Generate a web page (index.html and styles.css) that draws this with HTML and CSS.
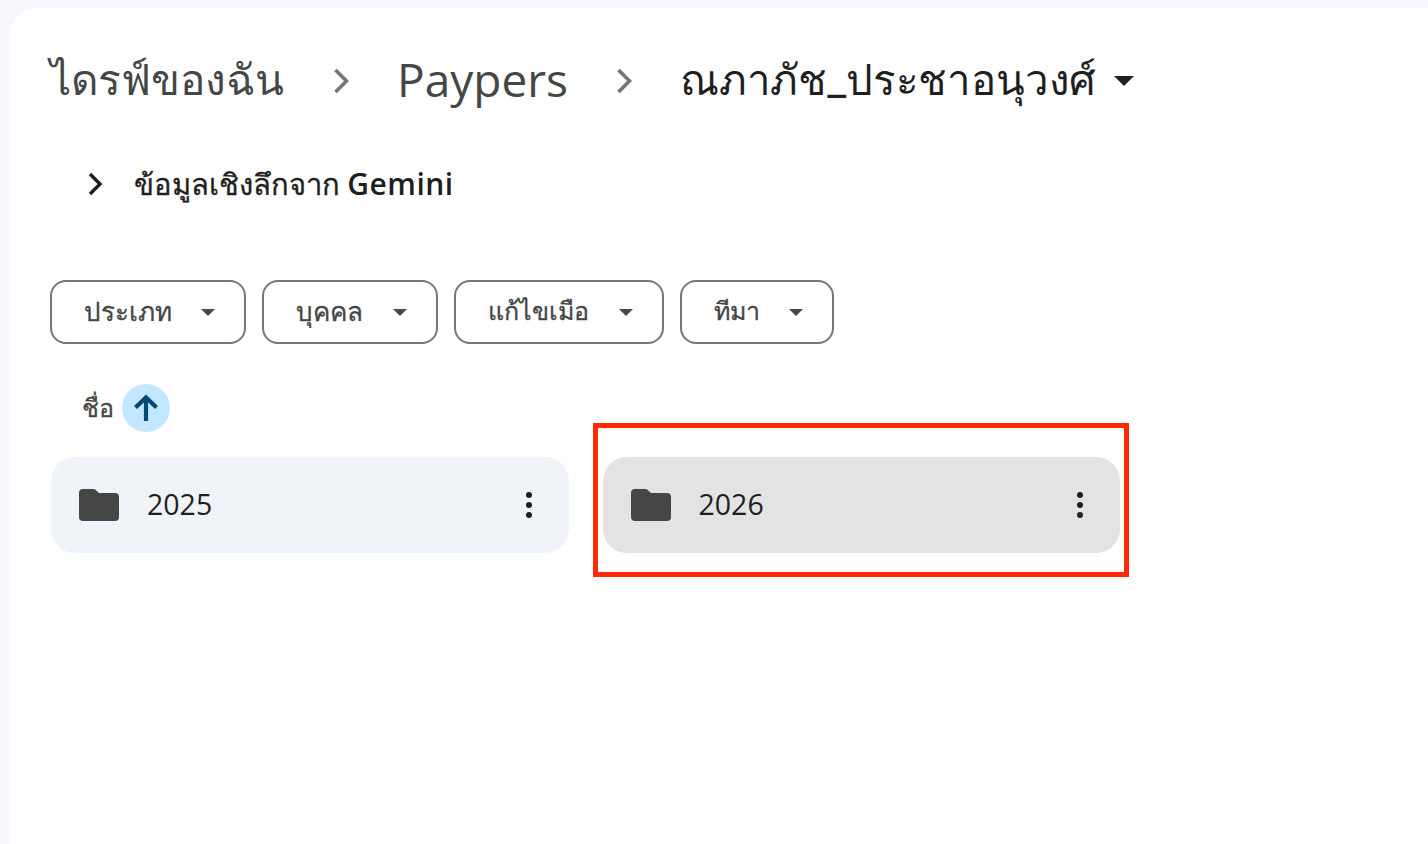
FILE: index.html
```html
<!DOCTYPE html>
<html lang="th">
<head>
<meta charset="utf-8">
<title>ณภาภัช_ประชาอนุวงศ์</title>
<link rel="stylesheet" href="styles.css">
</head>
<body>
<main class="panel">
  <nav class="crumbs">
    <span class="crumb">ไดรฟ์ของฉัน</span>
    <svg class="sep" viewBox="0 0 16 26"><path d="M2.500 2L13.500 13L2.500 24" fill="none" stroke="#747775" stroke-width="3.600"/></svg>
    <span class="crumb latin">Paypers</span>
    <svg class="sep" viewBox="0 0 16 26"><path d="M2.500 2L13.500 13L2.500 24" fill="none" stroke="#747775" stroke-width="3.600"/></svg>
    <span class="crumb current">ณภาภัช_ประชาอนุวงศ์</span>
    <span class="caret big"></span>
  </nav>
  <div class="insight">
    <svg class="insight-icon" viewBox="0 0 16 24"><path d="M3 2l10 10L3 22" fill="none" stroke="#1f1f1f" stroke-width="3.400"/></svg>
    <span>ข้อมูลเชิงลึกจาก <span class="latin-medium">Gemini</span></span>
  </div>
  <div class="filters">
    <button class="chip chip-type"><span>ประเภท</span><i class="caret"></i></button>
    <button class="chip chip-person"><span>บุคคล</span><i class="caret"></i></button>
    <button class="chip chip-edit"><span>แก้ไขเมือ</span><i class="caret"></i></button>
    <button class="chip chip-source"><span>ทีมา</span><i class="caret"></i></button>
  </div>
  <div class="sort">
    <span>ชื่อ</span>
    <span class="sort-btn"><svg viewBox="0 0 28 28"><path d="M14 27V3.500M3.500 13.500L14 3.500L24.500 13.500" fill="none" stroke="#004a77" stroke-width="4.200"/></svg></span>
  </div>
  <div class="grid">
    <div class="card">
      <svg class="folder" viewBox="0 0 40 32"><path d="M4 0h10.500a3 3 0 0 1 2.200 1L20 4h16a4 4 0 0 1 4 4v20a4 4 0 0 1-4 4H4a4 4 0 0 1-4-4V4a4 4 0 0 1 4-4z" fill="#444746"/></svg>
      <span class="name">2025</span>
      <span class="dots"><b></b><b></b><b></b></span>
    </div>
    <div class="card selected">
      <svg class="folder" viewBox="0 0 40 32"><path d="M4 0h10.500a3 3 0 0 1 2.200 1L20 4h16a4 4 0 0 1 4 4v20a4 4 0 0 1-4 4H4a4 4 0 0 1-4-4V4a4 4 0 0 1 4-4z" fill="#444746"/></svg>
      <span class="name">2026</span>
      <span class="dots"><b></b><b></b><b></b></span>
    </div>
  </div>
  <div class="highlight"></div>
</main>
</body>
</html>
```
FILE: styles.css
```css
* { box-sizing: border-box; }
html, body { height: 100%; }
body {
  margin: 0;
  background: #f8f9fe;
  font-family: Roboto, "Noto Sans", "Noto Sans CJK SC", sans-serif;
  color: #1f1f1f;
  overflow: hidden;
}
.panel {
  position: relative;
  margin: 8px 0 0 10px;
  height: 836px;
  background: #fff;
  border-radius: 28px 0 0 0;
  padding: 0 0 0 40px;
}
.crumbs {
  display: flex;
  align-items: center;
  height: 60px;
  padding-top: 43px;
  box-sizing: content-box;
  font-size: 42.300px;
  color: #444746;
}
.crumb { white-space: nowrap; line-height: 60px; }
.latin {
  font-family: "Open Sans", Roboto, sans-serif;
  font-size: 46px;
  margin: -4px -1px 0 -1px;
}
.latin-medium {
  font-family: "Open Sans", Roboto, sans-serif;
  font-size: 30px;
  font-weight: 600;
  letter-spacing: 0.5px;
  -webkit-text-stroke: 0;
}
.sep { width: 16px; height: 26px; margin: 0 49px; flex: none; }
.current { color: #1f1f1f; font-size: 42px; letter-spacing: -0.17px; margin-left: -1px; }
.caret {
  display: block;
  width: 0;
  height: 0;
  border-left: 7.500px solid transparent;
  border-right: 7.500px solid transparent;
  border-top: 7.500px solid #444746;
}
.caret.big {
  margin-left: 18px;
  border-left-width: 10px;
  border-right-width: 10px;
  border-top-width: 10px;
  border-top-color: #1f1f1f;
}
.insight {
  display: flex;
  align-items: center;
  margin-top: 53px;
  margin-left: 37px;
  height: 40px;
  font-size: 29.200px;
  font-weight: 500;
  -webkit-text-stroke: 0.35px #1f1f1f;
}
.insight-icon { width: 16px; height: 24px; margin-right: 31px; }
.filters { display: flex; gap: 16px; margin-top: 76px; }
.chip {
  display: flex;
  align-items: center;
  justify-content: space-between;
  height: 64px;
  padding: 0 28px 2px 32px;
  background: #fff;
  border: 2px solid #747775;
  border-radius: 16px;
  font: 500 26px Roboto, "Noto Sans", sans-serif;
  color: #444746;
  -webkit-text-stroke: 0.3px #444746;
}
.chip .caret { position: relative; top: 1px; left: -1px; }
.chip-type { width: 196px; }
.chip-person { width: 176px; }
.chip-edit { width: 210px; font-size: 25px; }
.chip-source { width: 154px; font-size: 25px; }
.sort {
  display: flex;
  align-items: center;
  gap: 8px;
  margin: 40px 0 0 32px;
  height: 48px;
  font-size: 25px;
  font-weight: 500;
  color: #444746;
  -webkit-text-stroke: 0.3px #444746;
}
.sort-btn {
  display: flex;
  align-items: center;
  justify-content: center;
  width: 48px;
  height: 48px;
  border-radius: 50%;
  background: #c2e7ff;
}
.sort-btn svg { width: 28px; height: 28px; }
.grid { display: flex; gap: 34px; margin: 25px 0 0 1px; }
.card {
  display: flex;
  align-items: center;
  width: 517.500px;
  height: 96px;
  padding: 0 37px 0 28px;
  border-radius: 24px;
  background: #f0f4f9;
}
.card.selected { background: #e3e3e3; }
.folder { width: 40px; height: 32px; flex: none; margin-right: 28px; }
.name { flex: 1; font-family: "Open Sans", Roboto, sans-serif; font-size: 28.500px; line-height: 32px; padding-bottom: 2px; }
.dots { display: flex; flex-direction: column; gap: 4px; }
.dots b { width: 6px; height: 6px; border-radius: 50%; background: #1f1f1f; }
.highlight {
  position: absolute;
  left: 583px;
  top: 415px;
  width: 536px;
  height: 154px;
  border: 5px solid #ff2b06;
}
```
